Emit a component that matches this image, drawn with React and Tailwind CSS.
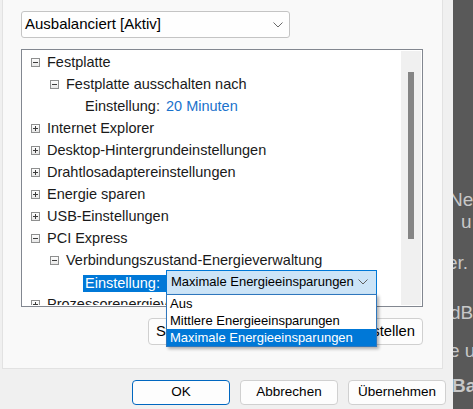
import React from "react";

const rows = [
  { lvl: 0, exp: "minus", text: "Festplatte" },
  { lvl: 1, exp: "minus", text: "Festplatte ausschalten nach" },
  { lvl: 2, label: "Einstellung:", value: "20 Minuten" },
  { lvl: 0, exp: "plus", text: "Internet Explorer" },
  { lvl: 0, exp: "plus", text: "Desktop-Hintergrundeinstellungen" },
  { lvl: 0, exp: "plus", text: "Drahtlosadaptereinstellungen" },
  { lvl: 0, exp: "plus", text: "Energie sparen" },
  { lvl: 0, exp: "plus", text: "USB-Einstellungen" },
  { lvl: 0, exp: "minus", text: "PCI Express" },
  { lvl: 1, exp: "minus", text: "Verbindungszustand-Energieverwaltung" },
  { lvl: 2, label: "Einstellung:", combo: true },
  { lvl: 0, exp: "plus", text: "Prozessorenergieverwaltung" },
];

const options = ["Aus", "Mittlere Energieeinsparungen", "Maximale Energieeinsparungen"];

function Expander({ kind }) {
  return (
    <svg width="9" height="9" viewBox="0 0 9 9" className="shrink-0">
      <defs>
        <linearGradient id="expfill" x1="0" y1="0" x2="0" y2="1">
          <stop offset="0" stopColor="#ffffff" />
          <stop offset="1" stopColor="#e6e6e6" />
        </linearGradient>
      </defs>
      <rect x="0.5" y="0.5" width="8" height="8" fill="url(#expfill)" stroke="#8e8f8f" />
      <line x1="2" y1="4.5" x2="7" y2="4.5" stroke="#3c3c3c" />
      {kind === "plus" && <line x1="4.5" y1="2" x2="4.5" y2="7" stroke="#3c3c3c" />}
    </svg>
  );
}

function Chevron({ color = "#5f5f5f" }) {
  return (
    <svg width="10" height="6" viewBox="0 0 10 6">
      <path d="M0.5 0.5 L5 5 L9.5 0.5" fill="none" stroke={color} strokeWidth="1" />
    </svg>
  );
}

function TreeRow({ row }) {
  const indent = { 0: "pl-[8px]", 1: "pl-[27px]", 2: "pl-[46px]" }[row.lvl];
  if (row.label) {
    return (
      <div className={`h-[22px] flex items-center ${indent} whitespace-nowrap`}>
        <div className="w-[14px] shrink-0" />
        {row.combo ? (
          <>
            <span className="w-[83px] h-[17px] leading-[17px] mt-[3px] px-[2px] bg-[#0078d7] text-white">
              {row.label}
            </span>
            <div className="w-[211px] h-[25px] border border-[#0078d7] bg-[#cce4f7] flex items-center pl-[4px] pr-[8px] text-[13px] text-black">
              <span className="flex-1">Maximale Energieeinsparungen</span>
              <Chevron />
            </div>
          </>
        ) : (
          <>
            <span className="w-[83px] px-[2px] text-[#1a1a1a]">{row.label}</span>
            <span className="text-[#1a72cc]">{row.value}</span>
          </>
        )}
      </div>
    );
  }
  return (
    <div className={`h-[22px] flex items-center ${indent} whitespace-nowrap text-[#1a1a1a]`}>
      <Expander kind={row.exp} />
      <span className="ml-[7px]">{row.text}</span>
    </div>
  );
}

const bgLines = [
  { t: "Ne", cls: "mt-[189px] ml-[-4px]" },
  { t: "u", cls: "mt-0 ml-[8px]" },
  { t: "er.", cls: "mt-[19px] ml-[-6px]" },
  { t: "dB", cls: "mt-[28px] ml-[-3px]" },
  { t: "e u", cls: "mt-[16px] ml-[-4px]" },
  { t: "Ba", cls: "mt-[13px] ml-[-1px] font-bold" },
];

export default function App() {
  return (
    <div className="w-[473px] h-[409px] flex overflow-hidden bg-[#f0f0f0] font-['Liberation_Sans',Arial,sans-serif]">
      <div className="w-[453px] shrink-0 flex flex-col pl-[2px]">
        <div className="relative w-[441px] h-[369px] bg-[#f9f9f9] border-l border-r border-b border-[#e2e2e2] pl-[18px] pt-[11px]">
          <div className="w-[269px] h-[27px] rounded-[3px] border border-[#c4c4c4] bg-[#fefefe] flex items-center pl-[3px] pr-[6px] text-[15px] text-black">
            <span className="flex-1">Ausbalanciert [Aktiv]</span>
            <Chevron color="#6a6a6a" />
          </div>

          <div className="mt-[11px] w-[402px] h-[258px] border border-[#828790] bg-white p-[1px] flex">
            <div className="flex-1 overflow-hidden text-[14.5px] leading-[22px]">
              {rows.map((r, i) => (
                <TreeRow key={i} row={r} />
              ))}
            </div>
            <div className="w-[20px] bg-[#f0f0f0] pl-[7px] pt-[21px]">
              <div className="w-[6px] h-[167px] bg-[#858585]" />
            </div>
          </div>

          <div className="w-[402px] mt-[11px] flex justify-end">
            <button className="w-[275px] h-[27px] rounded-[4px] border border-[#d0d0d0] bg-[#fdfdfd] text-[14.8px] text-black whitespace-nowrap">
              Standardeinstellungen wiederherstellen
            </button>
          </div>

          {/* open list of the setting's combo box, drawn over the tree and the button */}
          <div className="absolute left-[163px] top-[294px] w-[211px] bg-white border border-[#2f77bd] shadow-[2px_2px_3px_rgba(0,0,0,0.3)] text-[13px] z-10 whitespace-nowrap">
            {options.map((o, i) => (
              <div
                key={o}
                className={
                  i === 2
                    ? "h-[17px] leading-[17px] pl-[3px] bg-[#0078d7] text-white"
                    : "h-[17px] leading-[17px] pl-[3px] text-black"
                }
              >
                {o}
              </div>
            ))}
          </div>
        </div>

        <div className="flex justify-end gap-[10px] pr-[7px] pt-[11px] text-[13.5px] text-black">
          <button className="w-[98px] h-[25px] rounded-[4px] border border-[#0067c0] bg-[#fdfdfd]">OK</button>
          <button className="w-[98px] h-[25px] rounded-[4px] border border-[#d0d0d0] bg-[#fdfdfd]">Abbrechen</button>
          <button className="w-[98px] h-[25px] rounded-[4px] border border-[#d0d0d0] bg-[#fdfdfd]">Übernehmen</button>
        </div>
      </div>

      <div className="w-[20px] shrink-0 bg-[#595959] overflow-hidden flex flex-col text-[19px] leading-[22px] text-[#c8c8c8] whitespace-nowrap">
        {bgLines.map((l) => (
          <div key={l.t} className={l.cls}>
            {l.t}
          </div>
        ))}
      </div>
    </div>
  );
}
